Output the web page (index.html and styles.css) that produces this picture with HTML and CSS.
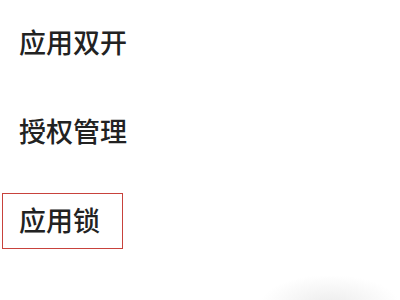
FILE: index.html
```html
<!DOCTYPE html>
<html lang="zh-CN">
<head>
  <meta charset="UTF-8">
  <title>设置</title>
  <link rel="stylesheet" href="styles.css">
</head>
<body>

  <div class="menu">
    <div class="item">应用双开</div>
    <div class="item">授权管理</div>
    <div class="item selected">应用锁</div>
  </div>

</body>
</html>
```

FILE: styles.css
```css
body {
  margin: 0;
  height: 300px;
  background: radial-gradient(ellipse 70px 30px at 330px 305px, #ececec, #fff);
  font-family: "Noto Sans CJK SC", "Noto Sans", sans-serif;
  overflow: hidden;
}

.menu {
  padding-top: 15px;
  display: flex;
  flex-direction: column;
  align-items: flex-start;
  gap: 33px;
}

.item {
  margin-left: 2px;
  height: 54px;
  padding-left: 16px;
  line-height: 51px;
  font-size: 27px;
  font-weight: 500;
  color: #222;
  white-space: nowrap;
  border: 1px solid transparent;
}

.selected {
  width: 103px;
  border-color: #c8423c;
}
```
